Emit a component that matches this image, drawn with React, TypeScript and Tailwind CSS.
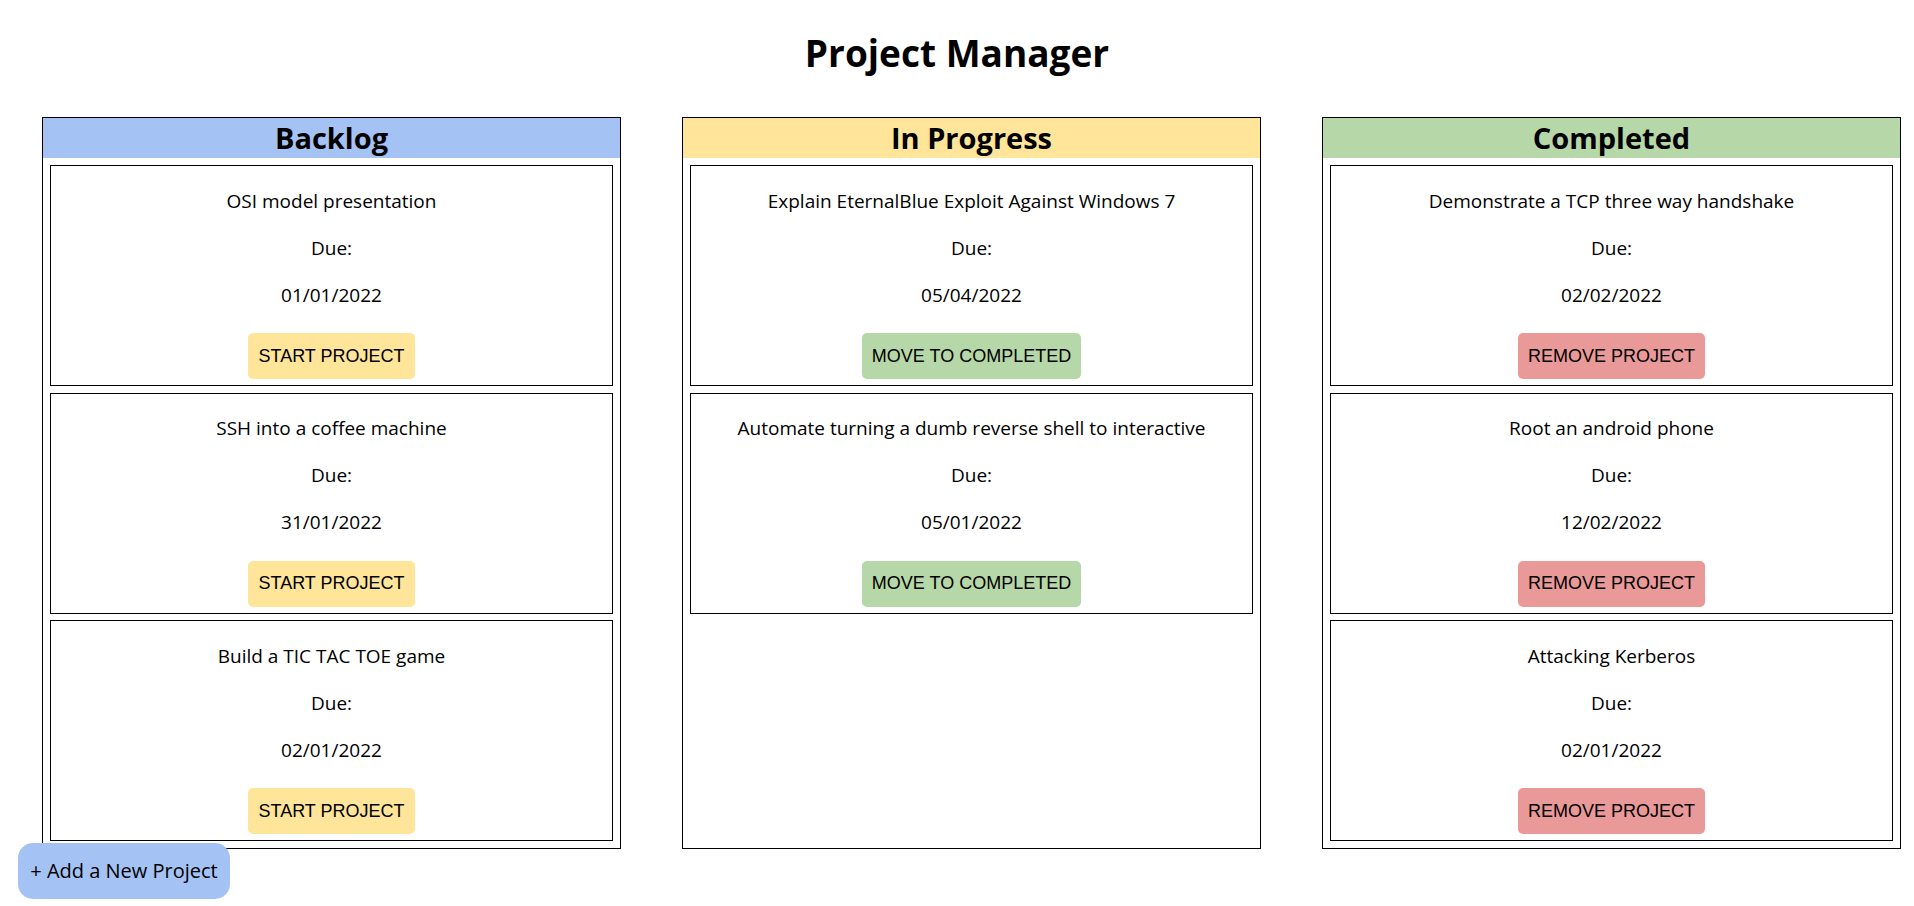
type Project = {
  title: string;
  due: string;
};

const backlog: Project[] = [
  { title: "OSI model presentation", due: "01/01/2022" },
  { title: "SSH into a coffee machine", due: "31/01/2022" },
  { title: "Build a TIC TAC TOE game", due: "02/01/2022" },
];

const inProgress: Project[] = [
  { title: "Explain EternalBlue Exploit Against Windows 7", due: "05/04/2022" },
  { title: "Automate turning a dumb reverse shell to interactive", due: "05/01/2022" },
];

const completed: Project[] = [
  { title: "Demonstrate a TCP three way handshake", due: "02/02/2022" },
  { title: "Root an android phone", due: "12/02/2022" },
  { title: "Attacking Kerberos", due: "02/01/2022" },
];

const ProjectCard = ({
  project,
  action,
  btnClass,
}: {
  project: Project;
  action: string;
  btnClass: string;
}) => {
  return (
    <div className="h-[221px] border border-black flex flex-col items-center pt-[21.5px] text-[19px] leading-[26.6px]">
      <p>{project.title}</p>
      <p className="mt-[20.5px]">Due:</p>
      <p className="mt-[20.5px]">{project.due}</p>
      <button
        className={`mt-[25px] h-[46px] px-[10px] rounded-[5px] text-[18px] text-black font-['Liberation_Sans',Arial,sans-serif] ${btnClass}`}
      >
        {action}
      </button>
    </div>
  );
};

const Column = ({
  title,
  headClass,
  projects,
  action,
  btnClass,
}: {
  title: string;
  headClass: string;
  projects: Project[];
  action: string;
  btnClass: string;
}) => {
  return (
    <div className="w-[579px] border border-black flex flex-col">
      <h2
        className={`h-[40px] text-center text-[29px] font-bold leading-[40px] ${headClass}`}
      >
        {title}
      </h2>
      <div className="flex flex-col gap-[6.5px] px-[7px] pt-[7px] pb-[7px]">
        {projects.map((p) => (
          <ProjectCard key={p.title} project={p} action={action} btnClass={btnClass} />
        ))}
      </div>
    </div>
  );
};

export default function App() {
  return (
    <div className="min-h-screen bg-white text-black font-['Open_Sans','Noto_Sans',sans-serif]">
      <h1 className="pt-[26px] text-center text-[37px] font-bold leading-[53px]">
        Project Manager
      </h1>

      <div className="flex items-stretch gap-[61px] pl-[42px] mt-[38px]">
        <Column
          title="Backlog"
          headClass="bg-[#a4c2f4]"
          projects={backlog}
          action="START PROJECT"
          btnClass="bg-[#ffe599]"
        />
        <Column
          title="In Progress"
          headClass="bg-[#ffe599]"
          projects={inProgress}
          action="MOVE TO COMPLETED"
          btnClass="bg-[#b6d7a8]"
        />
        <Column
          title="Completed"
          headClass="bg-[#b6d7a8]"
          projects={completed}
          action="REMOVE PROJECT"
          btnClass="bg-[#ea9999]"
        />
      </div>

      <button className="fixed left-[18px] bottom-[7px] h-[56px] w-[212px] rounded-[15px] bg-[#a4c2f4] text-[20px] text-black">
        + Add a New Project
      </button>
    </div>
  );
}
